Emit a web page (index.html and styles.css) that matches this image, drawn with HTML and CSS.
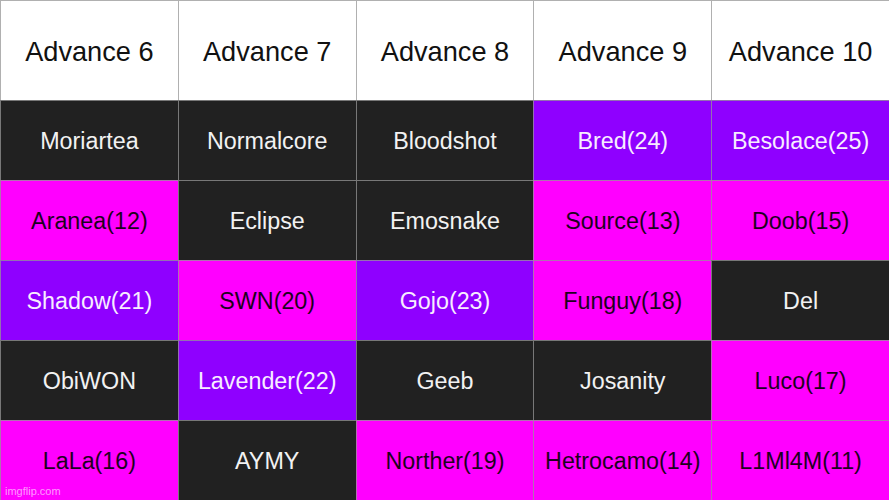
FILE: index.html
```html
<!DOCTYPE html>
<html>
<head>
<meta charset="utf-8">
<link rel="stylesheet" href="styles.css">
</head>
<body>
<div class="board">
  <div class="cell head">Advance 6</div>
  <div class="cell head">Advance 7</div>
  <div class="cell head">Advance 8</div>
  <div class="cell head">Advance 9</div>
  <div class="cell head">Advance 10</div>

  <div class="cell dark">Moriartea</div>
  <div class="cell dark">Normalcore</div>
  <div class="cell dark">Bloodshot</div>
  <div class="cell purple">Bred(24)</div>
  <div class="cell purple">Besolace(25)</div>

  <div class="cell pink">Aranea(12)</div>
  <div class="cell dark">Eclipse</div>
  <div class="cell dark">Emosnake</div>
  <div class="cell pink">Source(13)</div>
  <div class="cell pink">Doob(15)</div>

  <div class="cell purple">Shadow(21)</div>
  <div class="cell pink">SWN(20)</div>
  <div class="cell purple">Gojo(23)</div>
  <div class="cell pink">Funguy(18)</div>
  <div class="cell dark">Del</div>

  <div class="cell dark">ObiWON</div>
  <div class="cell purple">Lavender(22)</div>
  <div class="cell dark">Geeb</div>
  <div class="cell dark">Josanity</div>
  <div class="cell pink">Luco(17)</div>

  <div class="cell pink">LaLa(16)</div>
  <div class="cell dark">AYMY</div>
  <div class="cell pink">Norther(19)</div>
  <div class="cell pink">Hetrocamo(14)</div>
  <div class="cell pink">L1Ml4M(11)</div>
</div>
<div class="watermark">imgflip.com</div>
</body>
</html>
```
FILE: styles.css
```css
html, body {
  margin: 0;
  padding: 0;
}
body {
  width: 889px;
  height: 500px;
  position: relative;
  overflow: hidden;
  font-family: "Liberation Sans", Arial, sans-serif;
}
.board {
  display: grid;
  grid-template-columns: repeat(5, 1fr);
  grid-template-rows: 100px repeat(5, 80px);
  width: 889px;
  height: 500px;
}
.cell {
  box-sizing: border-box;
  border-top: 1px solid rgba(150, 150, 150, 0.75);
  border-left: 1px solid rgba(150, 150, 150, 0.75);
  display: flex;
  align-items: center;
  justify-content: center;
  padding-top: 2px;
  font-size: 23.3px;
  white-space: nowrap;
}
.head {
  background: #ffffff;
  color: #111111;
  font-size: 27.2px;
}
.dark {
  background: #212121;
  color: #f2f2f2;
}
.purple {
  background: #8f00ff;
  color: #f8ecff;
}
.pink {
  background: #ff00ff;
  color: #1e001e;
}
.watermark {
  position: absolute;
  left: 5px;
  bottom: 3px;
  font-size: 11px;
  color: rgba(255, 255, 255, 0.6);
  font-family: "Liberation Sans", Arial, sans-serif;
}
```
